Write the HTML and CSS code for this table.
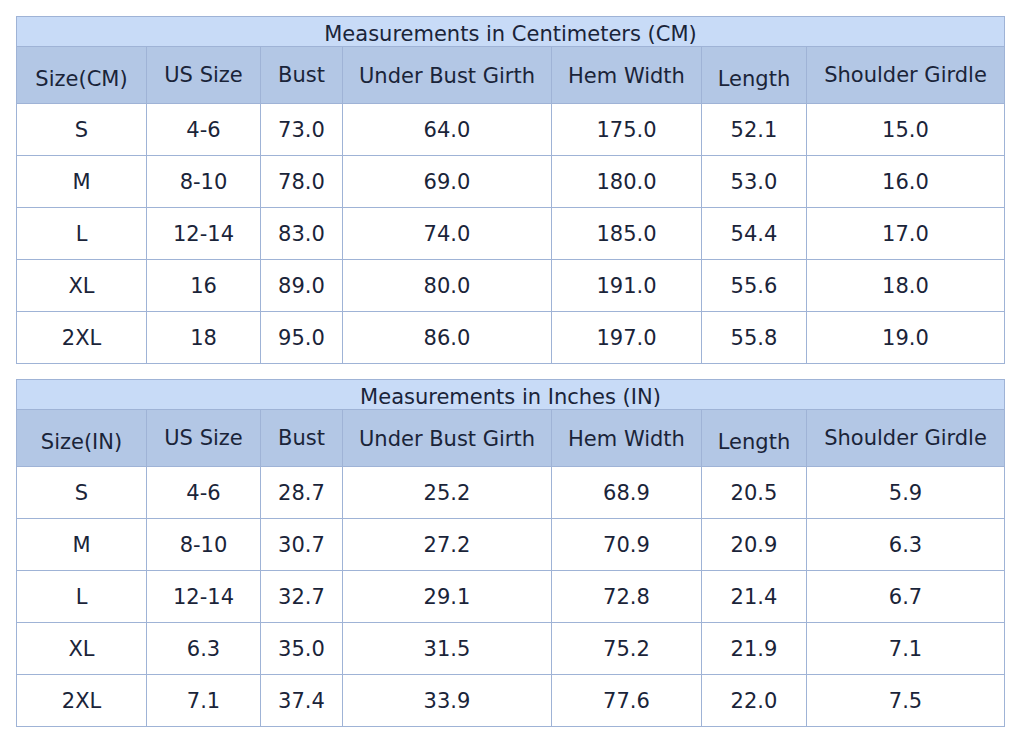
FILE: index.html
```html
<!DOCTYPE html>
<html>
<head>
<meta charset="utf-8">
<link rel="stylesheet" href="styles.css">
</head>
<body>
<div class="page">
<table class="size-table">
  <colgroup>
    <col class="c1"><col class="c2"><col class="c3"><col class="c4"><col class="c5"><col class="c6"><col class="c7">
  </colgroup>
  <tr class="title-row"><td colspan="7">Measurements in Centimeters (CM)</td></tr>
  <tr class="head-row">
    <td class="lo">Size(CM)</td>
    <td class="hi">US Size</td>
    <td class="hi">Bust</td>
    <td class="mid">Under Bust Girth</td>
    <td class="mid">Hem Width</td>
    <td class="lo">Length</td>
    <td class="hi">Shoulder Girdle</td>
  </tr>
  <tr class="data-row"><td>S</td><td>4-6</td><td>73.0</td><td>64.0</td><td>175.0</td><td>52.1</td><td>15.0</td></tr>
  <tr class="data-row"><td>M</td><td>8-10</td><td>78.0</td><td>69.0</td><td>180.0</td><td>53.0</td><td>16.0</td></tr>
  <tr class="data-row"><td>L</td><td>12-14</td><td>83.0</td><td>74.0</td><td>185.0</td><td>54.4</td><td>17.0</td></tr>
  <tr class="data-row"><td>XL</td><td>16</td><td>89.0</td><td>80.0</td><td>191.0</td><td>55.6</td><td>18.0</td></tr>
  <tr class="data-row"><td>2XL</td><td>18</td><td>95.0</td><td>86.0</td><td>197.0</td><td>55.8</td><td>19.0</td></tr>
</table>
<table class="size-table">
  <colgroup>
    <col class="c1"><col class="c2"><col class="c3"><col class="c4"><col class="c5"><col class="c6"><col class="c7">
  </colgroup>
  <tr class="title-row"><td colspan="7">Measurements in Inches (IN)</td></tr>
  <tr class="head-row">
    <td class="lo">Size(IN)</td>
    <td class="hi">US Size</td>
    <td class="hi">Bust</td>
    <td class="mid">Under Bust Girth</td>
    <td class="mid">Hem Width</td>
    <td class="lo">Length</td>
    <td class="hi">Shoulder Girdle</td>
  </tr>
  <tr class="data-row"><td>S</td><td>4-6</td><td>28.7</td><td>25.2</td><td>68.9</td><td>20.5</td><td>5.9</td></tr>
  <tr class="data-row"><td>M</td><td>8-10</td><td>30.7</td><td>27.2</td><td>70.9</td><td>20.9</td><td>6.3</td></tr>
  <tr class="data-row"><td>L</td><td>12-14</td><td>32.7</td><td>29.1</td><td>72.8</td><td>21.4</td><td>6.7</td></tr>
  <tr class="data-row"><td>XL</td><td>6.3</td><td>35.0</td><td>31.5</td><td>75.2</td><td>21.9</td><td>7.1</td></tr>
  <tr class="data-row"><td>2XL</td><td>7.1</td><td>37.4</td><td>33.9</td><td>77.6</td><td>22.0</td><td>7.5</td></tr>
</table>
</div>
</body>
</html>
```
FILE: styles.css
```css
html, body {
  margin: 0;
  padding: 0;
  background: #ffffff;
}
.page {
  padding: 16px;
  display: flex;
  flex-direction: column;
  gap: 15px;
}
.size-table {
  border-collapse: collapse;
  table-layout: fixed;
  width: 989px;
  font-family: "DejaVu Sans", Verdana, sans-serif;
  font-size: 21px;
  color: #1a2439;
}
.c1 { width: 130px; }
.c2 { width: 114px; }
.c3 { width: 82px; }
.c4 { width: 209px; }
.c5 { width: 150px; }
.c6 { width: 105px; }
.c7 { width: 198px; }
.size-table td {
  border: 1px solid #9fb3d6;
  text-align: center;
  vertical-align: middle;
  padding: 0;
  white-space: nowrap;
}
.title-row { height: 30px; }
.title-row td {
  background: #c8dbf7;
  padding-top: 4px;
}
.head-row { height: 57px; }
.head-row td {
  background: #b3c7e5;
}
.head-row td.lo { padding-top: 7px; }
.head-row td.mid { padding-top: 2px; }
.head-row td.hi { padding-top: 0; }
.data-row { height: 52px; }
```
